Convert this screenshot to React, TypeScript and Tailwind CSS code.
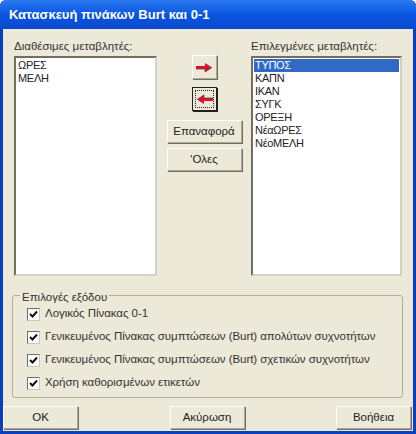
import React from 'react';

const leftItems = ['ΩΡΕΣ', 'ΜΕΛΗ'];
const rightItems = ['ΤΥΠΟΣ', 'ΚΑΠΝ', 'ΙΚΑΝ', 'ΣΥΓΚ', 'ΟΡΕΞΗ', 'ΝέαΩΡΕΣ', 'ΝέοΜΕΛΗ'];
const options = [
  'Λογικός Πίνακας 0-1',
  'Γενικευμένος Πίνακας συμπτώσεων (Burt) απολύτων συχνοτήτων',
  'Γενικευμένος Πίνακας συμπτώσεων (Burt) σχετικών συχνοτήτων',
  'Χρήση καθορισμένων ετικετών',
];

const raised =
  'bg-[#ece9d8] border border-t-white border-l-white border-r-[#aca899] border-b-[#aca899] shadow-[1px_1px_0_#716f64]';

const ListBox = ({ items, selected }: { items: string[]; selected?: number }) => (
  <div className="h-[220px] border-2 border-t-[#716f64] border-l-[#716f64] border-r-[#d4d0c8] border-b-[#d4d0c8] bg-white p-px text-[11px] leading-[13px] tracking-[-0.3px] text-[#222]">
    {items.map((item, i) => (
      <div key={item} className={i === selected ? 'h-[13px] bg-[#316ac5] pl-px text-white' : 'h-[13px] pl-px'}>
        {item}
      </div>
    ))}
  </div>
);

const Arrow = ({ left }: { left?: boolean }) => (
  <svg width="17" height="11" viewBox="0 0 17 11" className={left ? 'rotate-180' : ''}>
    <path d="M0 4h9V1l7 4.5L9 10V7H0z" fill="#e0102a" />
    <path d="M0 7h9v3l7-4.5" fill="none" stroke="#5a4a4a" strokeWidth="0.8" />
  </svg>
);

const PushButton = ({ label, className }: { label: string; className: string }) => (
  <div className={`${raised} flex items-center justify-center text-[11.5px] text-[#222] ${className}`}>{label}</div>
);

const Check = () => (
  <div className="flex h-[13px] w-[13px] items-center justify-center border border-t-[#716f64] border-l-[#716f64] border-r-[#c8c8c0] border-b-[#c8c8c0] bg-white">
    <svg width="9" height="9" viewBox="0 0 9 9">
      <path d="M1 4l2.5 2.5L8 1.5" fill="none" stroke="#111" strokeWidth="2" />
    </svg>
  </div>
);

export default function App() {
  return (
    <div className="flex h-[434px] w-[416px] flex-col overflow-hidden rounded-t-[6px] bg-[#0a3fc0] font-['Liberation_Sans',sans-serif]">
      <div className="flex h-[29px] shrink-0 items-center bg-gradient-to-b from-[#2a7af0] via-[#0a55e0] to-[#0a4ad0] pl-[9px] text-[13px] font-bold text-white">
        Κατασκευή πινάκων Burt και 0-1
      </div>
      <div className="mx-[3px] mb-[3px] flex min-h-0 flex-1 flex-col bg-[#ece9d8] px-[11px] pt-[10px] text-[11.5px] text-[#333]">
        <div className="flex">
          <div className="w-[143px] shrink-0">
            <div className="h-[17px] leading-[15px]">Διαθέσιμες μεταβλητές:</div>
            <ListBox items={leftItems} />
          </div>
          <div className="flex w-[94px] shrink-0 flex-col items-center pt-[16px]">
            <div className={`${raised} flex h-[24px] w-[25px] items-center justify-center`}>
              <Arrow />
            </div>
            <div className="mt-[8px] flex h-[24px] w-[25px] items-center justify-center border border-[#222] bg-[#ece9d8] shadow-[1px_1px_0_#222] outline-1 -outline-offset-4 outline-dotted outline-[#222]">
              <Arrow left />
            </div>
            <PushButton label="Επαναφορά" className="mt-[9px] h-[23px] w-[75px]" />
            <PushButton label="'Ολες" className="mt-[5px] h-[23px] w-[75px]" />
          </div>
          <div className="w-[151px] shrink-0">
            <div className="h-[17px] leading-[15px]">Επιλεγμένες μεταβλητές:</div>
            <ListBox items={rightItems} selected={0} />
          </div>
        </div>
        <fieldset className="-ml-[2px] mt-[13px] h-[109px] w-[391px] rounded-[3px] border border-[#b0ae9e] pl-[14px]">
          <legend className="-ml-[7px] translate-y-[2px] px-[2px] leading-[13px]">Επιλογές εξόδου</legend>
          <div className="flex flex-col gap-[9px] pt-[5px]">
            {options.map((option) => (
              <div key={option} className="flex h-[14px] items-center gap-[5px]">
                <Check />
                <span className="tracking-[-0.05px]">{option}</span>
              </div>
            ))}
          </div>
        </fieldset>
        <div className="-ml-[11px] -mr-[9px] mt-[8px] flex justify-between">
          <PushButton label="OK" className="h-[23px] w-[75px]" />
          <PushButton label="Ακύρωση" className="h-[23px] w-[75px]" />
          <PushButton label="Βοήθεια" className="h-[23px] w-[75px]" />
        </div>
      </div>
    </div>
  );
}
